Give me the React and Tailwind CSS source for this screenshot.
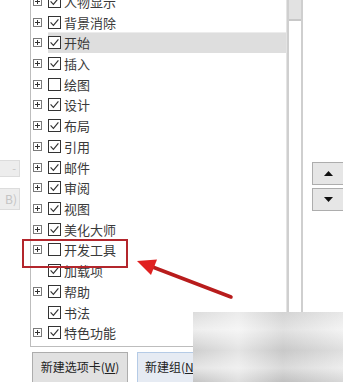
import React from "react";

const rows = [
  { label: "人物显示", checked: true, expand: true },
  { label: "背景消除", checked: true, expand: true },
  { label: "开始", checked: true, expand: true, active: true },
  { label: "插入", checked: true, expand: true },
  { label: "绘图", checked: false, expand: true },
  { label: "设计", checked: true, expand: true },
  { label: "布局", checked: true, expand: true },
  { label: "引用", checked: true, expand: true },
  { label: "邮件", checked: true, expand: true },
  { label: "审阅", checked: true, expand: true },
  { label: "视图", checked: true, expand: true },
  { label: "美化大师", checked: true, expand: true },
  { label: "开发工具", checked: false, expand: true },
  { label: "加载项", checked: true, expand: false },
  { label: "帮助", checked: true, expand: true },
  { label: "书法", checked: true, expand: false },
  { label: "特色功能", checked: true, expand: true },
];

const font = { fontFamily: '"Noto Sans CJK SC", "Liberation Sans", sans-serif' };

const ExpandBox = () => (
  <svg width="9" height="9" viewBox="0 0 9 9" className="shrink-0">
    <rect x="0.5" y="0.5" width="8" height="8" fill="#fff" stroke="#7a7a7a" />
    <path d="M2 4.5h5M4.5 2v5" stroke="#333" strokeWidth="1" />
  </svg>
);

const CheckBox = ({ checked }) => (
  <svg width="13" height="13" viewBox="0 0 13 13" className="shrink-0">
    <rect x="0.5" y="0.5" width="12" height="12" fill="#fff" stroke="#333" />
    {checked && (
      <path d="M2.6 6.4l2.8 2.9 5-6" fill="none" stroke="#333" strokeWidth="1.2" />
    )}
  </svg>
);

const Row = ({ row }) => (
  <div className="h-[20.73px] flex items-center relative">
    {row.active && (
      <div className="absolute left-[17px] right-0 top-0 bottom-0 bg-[#dedede] border-t border-[#ececec]" />
    )}
    <div className="w-[11px] flex justify-end relative">{row.expand && <ExpandBox />}</div>
    <div className="ml-[6px] relative">
      <CheckBox checked={row.checked} />
    </div>
    <span className="ml-[3px] text-[13px] text-[#3a3a3a] leading-none relative">{row.label}</span>
  </div>
);

export default function App() {
  return (
    <div className="relative w-[343px] h-[382px] overflow-hidden bg-white" style={font}>
      <div className="flex h-[347px]">
        {/* left side buttons */}
        <div className="w-[30px] shrink-0 flex flex-col pt-[160px] gap-[11px]">
          <div className="w-[20px] h-[17px] bg-[#ededed] border border-[#dcdcdc] border-l-0 flex items-center justify-end pr-[3px] text-[11px] text-[#c4c4c4] overflow-hidden">
            -
          </div>
          <div className="w-[20px] h-[22px] bg-[#ededed] border border-[#dcdcdc] border-l-0 flex items-center justify-end pr-[2px] text-[12px] text-[#c4c4c4] overflow-hidden">
            B)
          </div>
        </div>

        {/* list */}
        <div className="w-[257px] shrink-0 border-l border-b border-r border-[#bdbdbd] border-r-[#e4e4e4] overflow-hidden">
          <div className="mt-[-9px]">
            {rows.map((row) => (
              <Row key={row.label} row={row} />
            ))}
          </div>
        </div>

        {/* scrollbar */}
        <div className="w-[16px] shrink-0 border-l-2 border-r-2 border-[#cfcfcf] flex flex-col">
          <div className="h-[21px] bg-[#e2e2e2] border-b-2 border-[#c8c8c8]" />
        </div>

        {/* right buttons */}
        <div className="flex-1 flex flex-col pt-[162px] pl-[9px] gap-[3px]">
          <div className="h-[23px] w-[32px] bg-[#e6e6e6] border border-[#adadad] flex items-center justify-center">
            <svg width="9" height="5" viewBox="0 0 9 5">
              <path d="M4.5 0L9 5H0z" fill="#111" />
            </svg>
          </div>
          <div className="h-[23px] w-[32px] bg-[#e6e6e6] border border-[#adadad] flex items-center justify-center">
            <svg width="9" height="5" viewBox="0 0 9 5">
              <path d="M0 0h9L4.5 5z" fill="#111" />
            </svg>
          </div>
        </div>
      </div>

      {/* bottom buttons */}
      <div className="flex pl-[32px] pt-[5px] gap-[9px]">
        <div className="w-[96px] h-[32px] bg-[#e1e1e1] border border-[#adadad] flex items-start pt-[5px] justify-center text-[12px] text-[#222]">
          新建选项卡(<span className="underline">W</span>)
        </div>
        <div className="w-[96px] h-[32px] bg-[#e6ebf3] border border-[#b5cbe6] flex items-start pt-[5px] pl-[7px] text-[12px] text-[#222]">
          新建组(<span className="underline">N</span>)
        </div>
      </div>

      {/* blurred watermark corner */}
      <div className="absolute left-[193px] top-[312px] w-[150px] h-[70px] bg-[linear-gradient(180deg,#d8d8d8_0%,#ececec_25%,#c9c9c9_55%,#e2e2e2_80%,#bdbdbd_100%)]">
        <div className="w-full h-full bg-[linear-gradient(90deg,rgba(255,255,255,0.1)_0%,rgba(255,255,255,0.5)_30%,rgba(200,200,200,0.3)_60%,rgba(255,255,255,0.4)_100%)]" />
      </div>

      {/* highlight box */}
      <div className="absolute left-[22px] top-[239px] w-[106px] h-[29px] border-2 border-[#b3262c]" />

      {/* arrow */}
      <svg className="absolute left-0 top-0" width="343" height="382" viewBox="0 0 343 382">
        <line x1="231" y1="297" x2="150" y2="266" stroke="#b81c1c" strokeWidth="3.5" strokeLinecap="round" />
        <polygon points="137,261 157,259.5 151,275" fill="#e02020" />
      </svg>
    </div>
  );
}
